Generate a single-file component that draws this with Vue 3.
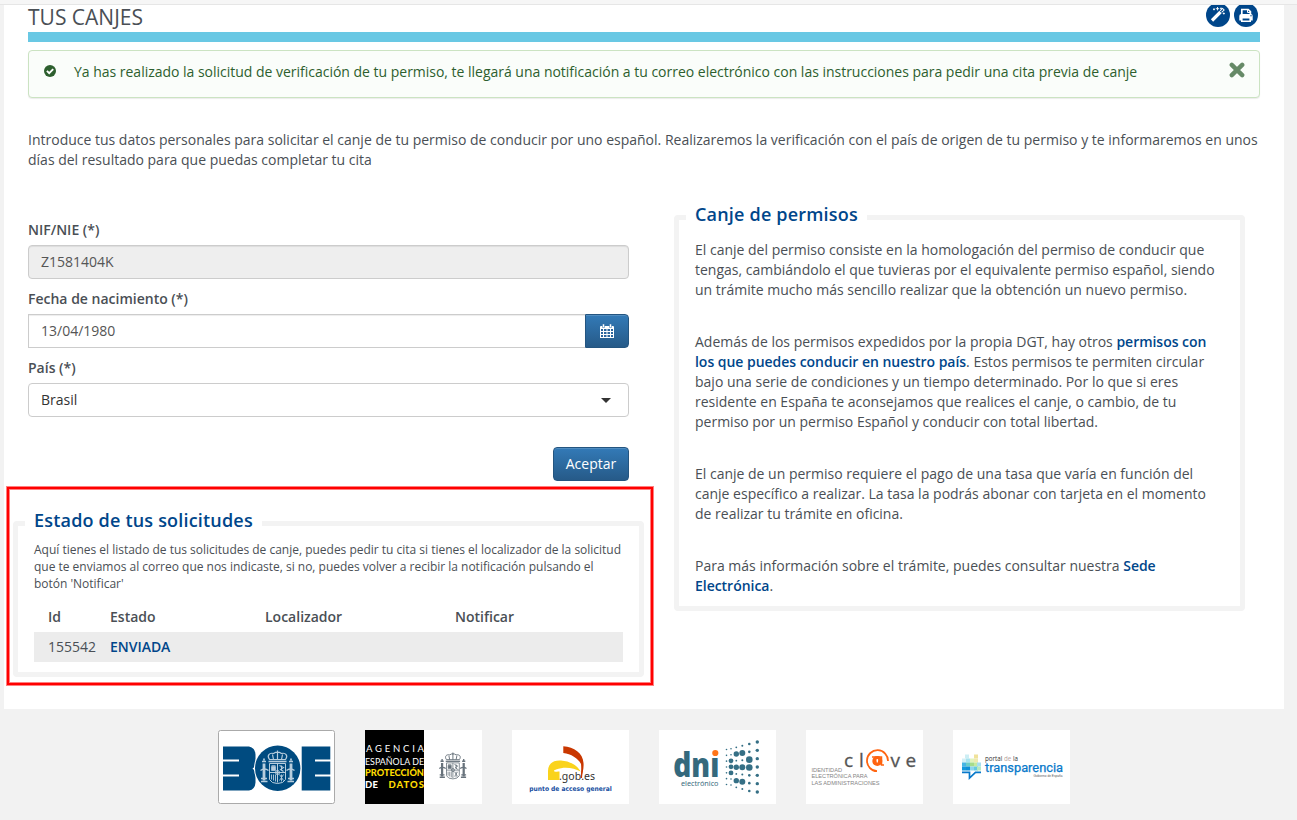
<script setup>
import { ref } from 'vue'

const nif = ref('Z1581404K')
const birth = ref('13/04/1980')
const country = ref('Brasil')
const requests = [{ id: '155542', status: 'ENVIADA' }]

const shade = 'rgba(18,86,112,0.85)'
const columns = [
  { x: 17.5, top: 19.5, bottom: 54.5, r: 0.8 },
  { x: 22, top: 18.7, bottom: 55, r: 0.8 },
  { x: 27.3, top: 17.3, bottom: 57.3, r: 0.9 },
  { x: 33.3, top: 15.7, bottom: 59, r: 1 },
  { x: 40.3, top: 14, bottom: 61, r: 1.3 },
  { x: 48.3, top: 12, bottom: 62, r: 1.7 },
]
const big = ['1-2', '1-3', '1-4', '2-1', '2-3', '2-5', '3-1', '3-3', '3-5', '4-2', '4-3']
const dots = columns.flatMap((c, i) =>
  Array.from({ length: 7 }, (_, j) => ({
    key: `${i}-${j}`,
    x: c.x,
    y: c.top + ((c.bottom - c.top) * j) / 6,
    r: big.includes(`${i}-${j}`) ? 2.1 + i * 0.3 : c.r,
  })),
)

const pixels = [
  [3, 0, '#cdeef4'], [9, 0, '#fff'], [12, 0, '#f0e29a'],
  [0, 4, '#d3f0f6'], [4, 4, '#a7e3ef'], [8, 4, '#e2f3bc'], [12, 4, '#efe9b0'],
  [0, 8, '#46b5e4'], [4, 8, '#6accc9'], [8, 8, '#a5dc8c'], [12, 8, '#c6e9a0'], [15, 8, '#a8def0'],
  [0, 12, '#1398dc'], [4, 12, '#0d8fd8'], [8, 12, '#8fd6ee'], [12, 12, '#66cbe0'], [15, 12, '#b7e9c0'],
]
</script>

<template>
  <div class="page">
    <div class="topline"></div>
    <svg class="defs" width="0" height="0" aria-hidden="true">
      <defs>
        <g id="arms" fill="none" stroke="currentColor">
          <path d="M10 9 C7 5 10 2 14 3 C17 1 19 1 22 3 C26 2 29 5 26 9 Z M18 0v3 M13 4l1 5 M23 4l-1 5 M18 2v7" stroke-width="1.2" />
          <path d="M9 11h18" stroke-width="1.6" />
          <path d="M10 13h16v16q-2 4-8 4q-6 0-8-4z M18 13v19 M10 22h16" stroke-width="1" />
          <path d="M12 20v-4h4v4z M12 15h4" fill="currentColor" stroke-width=".7" />
          <path d="M20 15l4 2-3 2 3 2 M22 15v5" stroke-width="1.1" />
          <path d="M12 24v5M14 24v6M16 24v7 M20 24l4 6 M24 24l-4 6 M22 24v7" stroke-width=".9" />
          <circle cx="18" cy="22" r="2" stroke-width="1" />
          <path d="M4.500 13v17 M31.500 13v17" stroke-width="2.800" />
          <path d="M2.500 11h4 M1.500 31h6.500 M29.500 11h4 M28 31h6.500 M4.500 8v2 M31.500 8v2 M1.500 28h6 M28.500 28h6" stroke-width="1.700" />
          <path d="M1 20q4-3 8 0 M27 20q4-3 8 0" stroke-width="1.500" />
        </g>
      </defs>
    </svg>

    <main class="sheet">
      <header class="head">
        <h1>TUS CANJES</h1>
        <div class="tools">
          <button class="round" aria-label="Asistente">
            <svg width="24" height="24" viewBox="0 0 24 24">
              <path d="M6 17.500L14.500 9" stroke="#fff" stroke-width="3.200" />
              <path d="M14.800 8.700L17.700 5.800" stroke="#fff" stroke-width="3.200" />
              <path d="M14.600 8.900L17 6.500" stroke="#00468a" stroke-width="1.200" />
              <path d="M8 5.300v2M7 6.300h2M11.500 4v3.400M9.800 5.700h3.400M15 4.600v1.600M14.200 5.400h1.600M17.800 9.500v2M16.800 10.500h2" stroke="#fff" stroke-width=".9" />
            </svg>
          </button>
          <button class="round" aria-label="Imprimir">
            <svg width="24" height="24" viewBox="0 0 24 24">
              <path d="M7.800 12V6.500h6.400l2.200 2.200V12" fill="none" stroke="#fff" stroke-width="1.700" />
              <path d="M13.500 6v3.500h3" fill="none" stroke="#fff" stroke-width="1" />
              <path d="M5.300 17.500v-4.500q0-2 2-2h9.400q2 0 2 2v4.500h-2.300v-3h-8.800v3z" fill="#fff" />
              <path d="M7.800 14.800h8.400v3.500h-8.400z" fill="#00468a" stroke="#fff" stroke-width="1.600" />
              <circle cx="17" cy="12.700" r=".7" fill="#00468a" />
            </svg>
          </button>
        </div>
      </header>

      <div class="alert">
        <svg class="ok" width="12" height="12" viewBox="0 0 12 12">
          <circle cx="6" cy="6" r="6" fill="#2d5f2e" />
          <path d="M2.900 5.900L5.200 8.100L9.200 4.100" fill="none" stroke="#fff" stroke-width="1.900" />
        </svg>
        <span>Ya has realizado la solicitud de verificación de tu permiso, te llegará una notificación a tu correo electrónico con las instrucciones para pedir una cita previa de canje</span>
        <svg class="close" width="16" height="16" viewBox="0 0 16 16">
          <path d="M2.800 2.900L13.200 13.100M13.200 2.900L2.800 13.100" stroke="#668a67" stroke-width="4.400" stroke-linecap="round" />
        </svg>
      </div>

      <p class="intro">Introduce tus datos personales para solicitar el canje de tu permiso de conducir por uno español. Realizaremos la verificación con el país de origen de tu permiso y te informaremos en unos días del resultado para que puedas completar tu cita</p>

      <div class="cols">
        <section class="left">
          <label>NIF/NIE (*)</label>
          <div class="field disabled">{{ nif }}</div>
          <label>Fecha de nacimiento (*)</label>
          <div class="group">
            <div class="field date">{{ birth }}</div>
            <button class="btn cal" aria-label="Calendario">
              <svg width="14" height="14" viewBox="0 0 14 14">
                <path d="M0 3q0-1 1-1h12q1 0 1 1v11H0z" fill="#fff" />
                <path d="M2.500 0h2v3.500h-2zM9.500 0h2v3.500h-2z" fill="#fff" stroke="#2d6ca7" stroke-width=".5" />
                <path d="M1 5h2v2H1zM4 5h2.500v2H4zM7.500 5H10v2H7.500zM11 5h2v2h-2zM1 8h2v2H1zM4 8h2.500v2H4zM7.500 8H10v2H7.500zM11 8h2v2h-2zM1 11h2v2H1zM4 11h2.500v2H4zM7.500 11H10v2H7.500zM11 11h2v2h-2z" fill="#2b659d" />
              </svg>
            </button>
          </div>
          <label>País (*)</label>
          <div class="field select"><span>{{ country }}</span><i class="caret"></i></div>
          <div class="actions"><button class="btn accept">Aceptar</button></div>

          <div class="status">
            <fieldset>
              <legend>Estado de tus solicitudes</legend>
              <p class="small">Aquí tienes el listado de tus solicitudes de canje, puedes pedir tu cita si tienes el localizador de la solicitud que te enviamos al correo que nos indicaste, si no, puedes volver a recibir la notificación pulsando el botón 'Notificar'</p>
              <div class="row th"><span>Id</span><span>Estado</span><span>Localizador</span><span>Notificar</span></div>
              <div v-for="r in requests" :key="r.id" class="row td"><span>{{ r.id }}</span><b>{{ r.status }}</b></div>
            </fieldset>
            <div class="mark"></div>
          </div>
        </section>

        <fieldset class="info">
          <legend>Canje de permisos</legend>
          <p>El canje del permiso consiste en la homologación del permiso de conducir que tengas, cambiándolo el que tuvieras por el equivalente permiso español, siendo un trámite mucho más sencillo realizar que la obtención un nuevo permiso.</p>
          <p>Además de los permisos expedidos por la propia DGT, hay otros <b>permisos con los que puedes conducir en nuestro país</b>. Estos permisos te permiten circular bajo una serie de condiciones y un tiempo determinado. Por lo que si eres residente en España te aconsejamos que realices el canje, o cambio, de tu permiso por un permiso Español y conducir con total libertad.</p>
          <p>El canje de un permiso requiere el pago de una tasa que varía en función del canje específico a realizar. La tasa la podrás abonar con tarjeta en el momento de realizar tu trámite en oficina.</p>
          <p>Para más información sobre el trámite, puedes consultar nuestra <b>Sede Electrónica</b>.</p>
        </fieldset>
      </div>
    </main>

    <footer class="logos">
      <svg class="logo" viewBox="0 0 117 74">
        <rect x=".5" y=".5" width="116" height="73" rx="2" fill="#fff" stroke="#aaa" />
        <path d="M5 16.500h26q6 1 6.500 8v8q0 4-3 6q3 2 3 6v8q-.5 7-6.500 8H5V46.500h16v-2H5V31.500h16v-2H5z" fill="#004b80" />
        <path d="M83.700 16.500h28.600v13H97v2h15.300v13H97v2h15.300v14H83.700z" fill="#004b80" />
        <circle cx="59.700" cy="38.300" r="23.700" fill="#fff" />
        <circle cx="59.700" cy="38.300" r="22.700" fill="#004b80" />
        <use href="#arms" transform="translate(41.500 20.500)" color="#b7cddd" />
      </svg>

      <svg class="logo" viewBox="0 0 117 74">
        <rect width="117" height="74" fill="#fff" />
        <rect width="59" height="74" fill="#000" />
        <g class="aepd" fill="#fff">
          <text x="1" y="22.300" textLength="58">AGENCIA</text>
          <text x="0" y="34.500" textLength="59" lengthAdjust="spacingAndGlyphs">ESPAÑOLA DE</text>
          <text class="heavy" x="0" y="46.300" textLength="59" lengthAdjust="spacingAndGlyphs" fill="#ffdc00">PROTECCIÓN</text>
          <text class="heavy" x="0" y="58.300" textLength="13">DE</text>
          <text class="heavy" x="23.500" y="58.300" textLength="35.500" fill="#ffdc00">DATOS</text>
        </g>
        <use href="#arms" transform="translate(73.500 22.500) scale(.8)" color="#68737c" />
      </svg>

      <svg class="logo" viewBox="0 0 117 74">
        <rect width="117" height="74" fill="#fff" />
        <path d="M51.300 16.200C62 17 71 23 71.500 33C72 38 70.500 44 69 48C69 43 69.500 38 69 34C66 28 59 24 51.300 23z" fill="#c93700" />
        <path d="M36 50V41C36 33 42 30 49 30.500C58 31 66 36 68.500 41.500C62 38.500 54 36 44 39.500C40 41 42 42 47.500 41.500V50z" fill="#fad31c" />
        <text class="gob" x="47" y="49.500" textLength="36" lengthAdjust="spacingAndGlyphs">.gob.es</text>
        <path d="M69 43L71 37L70 48L68.600 48z" fill="#c93700" />
        <text class="pag" x="17.300" y="61" textLength="82.500" lengthAdjust="spacingAndGlyphs">punto de acceso general</text>
      </svg>

      <svg class="logo" viewBox="0 0 117 74">
        <rect width="117" height="74" fill="#fff" />
        <text class="dni" x="14.300" y="46.500" textLength="46" lengthAdjust="spacingAndGlyphs">dnı</text>
        <circle cx="56.300" cy="23" r="3.100" fill="#ff7518" />
        <text class="elec" x="22" y="55.500" textLength="37.500" lengthAdjust="spacingAndGlyphs">electrónico</text>
        <g transform="translate(50 0)">
          <circle v-for="d in dots" :key="d.key" :cx="d.x" :cy="d.y" :r="d.r" :fill="shade" />
        </g>
      </svg>

      <svg class="logo" viewBox="0 0 117 74">
        <rect width="117" height="74" fill="#fff" />
        <g class="clave">
          <text x="38" y="36.500">c</text><text x="53" y="36.500">l</text>
          <text x="84.500" y="36.500">v</text><text x="99.500" y="36.500">e</text>
        </g>
        <path d="M71 41.200A10.500 10.500 0 1 1 82 31" fill="none" stroke="#ff6410" stroke-width="1.800" />
        <path d="M66 27h9.500v8h2.500" fill="none" stroke="#ff6410" stroke-width="1.500" />
        <circle cx="71.300" cy="31" r="5" fill="#ff6410" />
        <path d="M70.400 30a.9 .9 0 1 1 1.800 0l-.4 2.600h-1z" fill="#fff" />
        <g class="ident">
          <text x="5.500" y="42" textLength="30.500" lengthAdjust="spacingAndGlyphs">IDENTIDAD</text>
          <text x="5.500" y="48.300" textLength="56" lengthAdjust="spacingAndGlyphs">ELECTRÓNICA PARA</text>
          <text x="5.500" y="54.600" textLength="68" lengthAdjust="spacingAndGlyphs">LAS ADMINISTRACIONES</text>
        </g>
      </svg>

      <svg class="logo" viewBox="0 0 117 74">
        <rect width="117" height="74" fill="#fff" />
        <g transform="translate(9 24.500)">
          <rect v-for="(p, i) in pixels" :key="i" :x="p[0]" :y="p[1]" width="4" height="4" :fill="p[2]" />
          <path d="M0 17.800h7.500V23.500L13.500 17.800H19" fill="none" stroke="#0879ca" stroke-width="1.700" />
        </g>
        <text class="portal" x="32" y="31.200" textLength="33" lengthAdjust="spacingAndGlyphs">portal <tspan fill="#b7a3a0">de</tspan> la</text>
        <text class="trans" x="32" y="42" textLength="78" lengthAdjust="spacingAndGlyphs">transparencia</text>
        <text class="gov" x="80.500" y="46.800" textLength="29" lengthAdjust="spacingAndGlyphs">Gobierno de España</text>
      </svg>
    </footer>
  </div>
</template>

<style>
body { margin: 0; background: #f2f2f2; overflow: hidden; }
</style>

<style scoped>
* { box-sizing: border-box; }
.page { width: 1297px; height: 820px; overflow: hidden; background: #f2f2f2; font: 14px/20px "Open Sans", "Noto Sans", sans-serif; color: #4a4f55; }
.defs { display: block; }
.topline { height: 5px; background: #f6f6f6; border-bottom: 1px solid #e6e6e6; }
.sheet { width: 1280px; height: 704px; margin-left: 4px; padding: 0 24px; background: #fff; }
.head { height: 37px; display: flex; justify-content: space-between; border-bottom: 10px solid #69c8e4; }
h1 { margin: 0; font-size: 21px; font-weight: 400; line-height: 25px; }
.tools { display: flex; gap: 4px; padding-right: 2px; height: 23px; overflow: hidden; }
.round { display: block; width: 24px; height: 24px; margin-top: -2px; padding: 0; border: 0; border-radius: 50%; background: #00468a; }
.round svg { display: block; }
.alert { display: flex; align-items: flex-start; height: 48px; margin-top: 8px; padding: 12px 14px 12px 15px; border: 1px solid #cbe3c2; border-radius: 4px; background: #fafdfa; box-shadow: 0 1px 1px rgba(0,0,0,.08); color: #2d5f2e; white-space: nowrap; line-height: 18px; letter-spacing: -.015px; }
.ok { margin: 2px 18px 0 0; }
.close { margin: -1px 0 0 auto; }
.intro { margin: 32px 0 0; }
.cols { display: flex; align-items: flex-start; margin-top: 35px; }
.left { width: 601px; padding-top: 15px; }
label { display: block; height: 20px; margin-bottom: 5px; font-weight: 600; }
.field { height: 34px; margin-bottom: 10px; padding: 6px 12px; border: 1px solid #ccc; border-radius: 4px; background: #fff; color: #555; box-shadow: inset 0 1px 1px rgba(0,0,0,.075); }
.disabled { background: #eee; }
.group { display: flex; height: 34px; margin-bottom: 10px; }
.date { flex: 1; border-right: 0; border-radius: 0; }
.btn { border: 1px solid #245580; background: linear-gradient(#337ab7, #265a88); color: #fff; font: inherit; box-shadow: inset 0 1px 0 rgba(255,255,255,.15); padding: 0; }
.cal { display: flex; align-items: center; justify-content: center; width: 44px; border-radius: 0 4px 4px 0; }
.select { display: flex; justify-content: space-between; align-items: center; margin: 0; color: #333; box-shadow: none; }
.caret { margin-right: 5px; border: 5px solid transparent; border-top-color: #333; border-bottom: 0; }
.actions { display: flex; justify-content: flex-end; margin-top: 30px; }
.accept { width: 76px; height: 34px; border-radius: 4px; }
.status { position: relative; margin: 30px -15px 0; }
fieldset { margin: 0; padding: 0 16px 10px; border: 5px solid #f3f3f3; border-radius: 4px; min-width: 0; }
legend { height: 25px; margin-left: -9px; padding: 0 9px; font-size: 18px; line-height: 18px; font-weight: 600; letter-spacing: .19px; color: #00468a; white-space: nowrap; }
.small { margin: 5px 0 0; font-size: 12px; line-height: 17px; letter-spacing: -.01px; }
.row { display: grid; grid-template-columns: 62px 155px 190px 1fr; height: 30px; line-height: 30px; padding-left: 14px; }
.th { margin-top: 10px; font-weight: 600; }
.td { background: #ececec; }
b { font-weight: 600; color: #00468a; letter-spacing: -.03px; }
.mark { position: absolute; left: -6px; top: -24px; width: 646px; height: 198px; border: 2px solid #f00; box-shadow: 0 0 0 1px rgba(255,0,0,.5), inset 0 0 0 1px rgba(255,0,0,.5); }
.info { width: 571px; height: 406px; margin-left: 45px; }
.info p { margin: 0 0 32px; }
.info legend + p { margin-top: 10px; }
.logos { display: flex; gap: 30px; padding: 21px 0 0 218px; }
.logo { display: block; width: 117px; height: 74px; }
.aepd { font: 400 9.5px Lato, sans-serif; }
.heavy { font-weight: 900; }
.gob { font: 400 11px "Noto Sans", sans-serif; fill: #333; }
.pag { font: 700 6.5px "DejaVu Sans", sans-serif; fill: #164da0; }
.dni { font: 800 34px "Open Sans", sans-serif; fill: #34697d; }
.elec { font: 400 7px "Noto Sans", sans-serif; fill: #386b7e; }
.clave { font: 400 19px "Open Sans", sans-serif; fill: #555; stroke: #555; stroke-width: .3px; }
.ident { font: 400 5.6px "Liberation Sans", sans-serif; fill: #858585; }
.portal { font: 400 6.5px "Open Sans", sans-serif; fill: #333; }
.trans { font: 400 12px Roboto, sans-serif; fill: #0879ca; stroke: #0879ca; stroke-width: .25px; }
.gov { font: 400 3.3px "Liberation Sans", sans-serif; fill: #555; }
</style>
